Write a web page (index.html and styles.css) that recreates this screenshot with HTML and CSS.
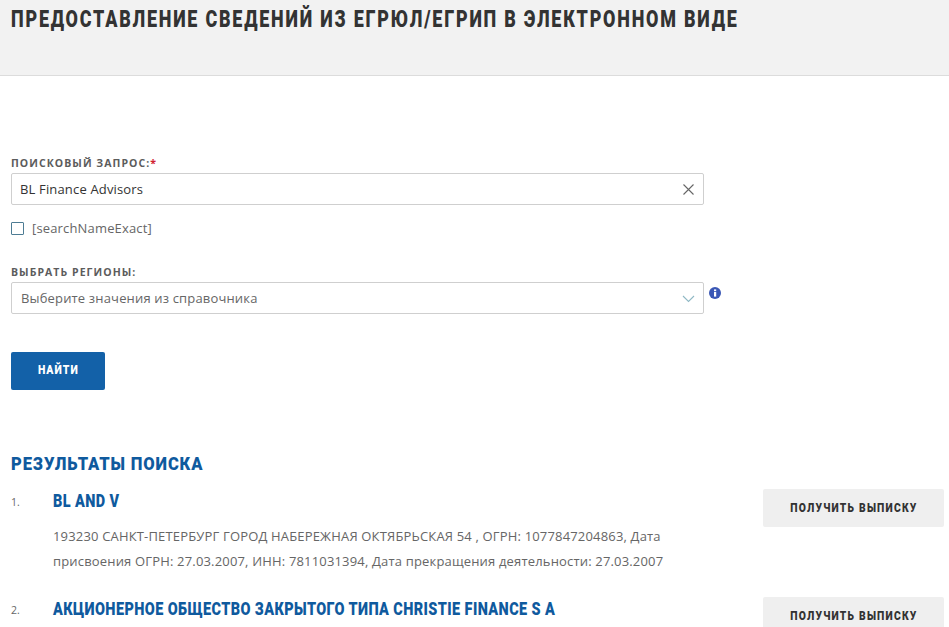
FILE: index.html
```html
<!DOCTYPE html>
<html lang="ru">
<head>
<meta charset="utf-8">
<title>Предоставление сведений из ЕГРЮЛ/ЕГРИП</title>
<link rel="stylesheet" href="styles.css">
</head>
<body>
<header class="page-head">
  <h1 class="page-title cond">ПРЕДОСТАВЛЕНИЕ СВЕДЕНИЙ ИЗ ЕГРЮЛ/ЕГРИП В ЭЛЕКТРОННОМ ВИДЕ</h1>
</header>
<main class="content">
  <form class="search-form">
    <div class="field">
      <div class="field-label">ПОИСКОВЫЙ ЗАПРОС:<span class="req">*</span></div>
      <div class="input-box">
        <span class="input-text">BL Finance Advisors</span>
        <svg class="icon-x" viewBox="0 0 13 13" width="13" height="13"><path d="M1.5 1.5L11.5 11.5M11.5 1.5L1.5 11.5" fill="none" stroke="#666" stroke-width="1.1"/></svg>
      </div>
    </div>
    <label class="check-row"><span class="checkbox"></span><span class="check-text">[searchNameExact]</span></label>
    <div class="field field-regions">
      <div class="field-label">ВЫБРАТЬ РЕГИОНЫ:</div>
      <div class="select-row">
        <div class="input-box">
          <span class="select-text">Выберите значения из справочника</span>
          <svg class="icon-chev" viewBox="0 0 13 8" width="13" height="8"><path d="M1 1L6.5 6.5L12 1" fill="none" stroke="#8fb8c4" stroke-width="1.1"/></svg>
        </div>
        <svg class="icon-info" viewBox="0 0 12 12" width="12" height="12"><circle cx="6" cy="6" r="6" fill="#3a57b5"/><rect x="5" y="5" width="2.2" height="4.6" fill="#fff"/><rect x="5" y="2.4" width="2.2" height="1.8" fill="#fff"/></svg>
      </div>
    </div>
    <button class="btn-primary" type="button"><span class="btn-label">НАЙТИ</span></button>
  </form>
  <section class="results">
    <h2 class="results-title cond">РЕЗУЛЬТАТЫ ПОИСКА</h2>
    <ol class="result-list">
      <li class="result">
        <span class="result-num">1.</span>
        <div class="result-body">
          <h3 class="result-name cond">BL AND V</h3>
          <p class="result-text">193230 САНКТ-ПЕТЕРБУРГ ГОРОД НАБЕРЕЖНАЯ ОКТЯБРЬСКАЯ 54 , ОГРН: 1077847204863, Дата присвоения ОГРН: 27.03.2007, ИНН: 7811031394, Дата прекращения деятельности: 27.03.2007</p>
        </div>
        <button class="btn-light" type="button"><span class="btn-label">ПОЛУЧИТЬ ВЫПИСКУ</span></button>
      </li>
      <li class="result result-second">
        <span class="result-num">2.</span>
        <div class="result-body">
          <h3 class="result-name cond">АКЦИОНЕРНОЕ ОБЩЕСТВО ЗАКРЫТОГО ТИПА CHRISTIE FINANCE S A</h3>
        </div>
        <button class="btn-light" type="button"><span class="btn-label">ПОЛУЧИТЬ ВЫПИСКУ</span></button>
      </li>
    </ol>
  </section>
</main>
</body>
</html>
```
FILE: styles.css
```css
* { box-sizing: border-box; }
html, body { margin: 0; height: 627px; overflow: hidden; background: #fff; }
body { font-family: "Open Sans", "Noto Sans", sans-serif; color: #333; }
h1, h2, h3, p, ol { margin: 0; padding: 0; }

.cond { font-family: "Roboto", sans-serif; font-weight: 900; white-space: nowrap; transform-origin: left center; }

.page-head { height: 76px; background: #f2f2f2; border-bottom: 1px solid #dcdcdc; padding: 5px 11px 0; }
.page-title { font-size: 24px; line-height: 28px; letter-spacing: 2.4px; color: #333; transform: scaleX(.747); }

.content { padding: 0 5px 0 11px; }
.search-form { padding-top: 80px; width: 710px; }
.field-label { font-size: 10.5px; line-height: 14px; font-weight: 700; letter-spacing: 1.05px; color: #5c5c5c; }
.req { color: #d0202e; }
.input-box { width: 693px; height: 32px; margin-top: 3px; border: 1px solid #cfcfcf; border-radius: 2px; background: #fff; display: flex; align-items: center; justify-content: space-between; padding: 0 8px; font-size: 13px; letter-spacing: .16px; }
.input-text { color: #333; }
.select-text { color: #666; padding-left: 1px; }
.icon-chev { margin-top: 1px; }
.check-row { display: flex; align-items: center; gap: 8px; margin-top: 15px; height: 16px; }
.checkbox { width: 13px; height: 13px; border: 1px solid #4d7c94; border-radius: 1px; }
.check-text { font-size: 13px; letter-spacing: .16px; color: #666; }
.field-regions { margin-top: 29px; }
.select-row { display: flex; align-items: flex-start; gap: 5px; }
.icon-info { margin-top: 8px; }
.btn-primary { display: block; width: 94px; height: 38px; margin-top: 38px; padding: 0 0 3px; border: 0; border-radius: 2px; background: #1361a8; color: #fff; }
.btn-label { display: inline-block; font-family: "Roboto", sans-serif; font-weight: 900; white-space: nowrap; font-size: 12.5px; letter-spacing: 1.2px; transform: scaleX(.84); }

.results { margin-top: 62px; }
.results-title { font-size: 19px; line-height: 24px; letter-spacing: 1px; color: #0f5a9e; transform: scaleX(.87); }
.result-list { list-style: none; margin-top: 13px; }
.result { display: flex; align-items: flex-start; }
.result-second { margin-top: 23px; }
.result-num { width: 42px; flex: none; font-size: 10.5px; line-height: 16px; padding-top: 5px; color: #666; }
.result-body { width: 710px; flex: none; }
.result-name { font-size: 18px; line-height: 24px; letter-spacing: .5px; color: #0f5a9e; transform: scaleX(.803); }
.result-text { width: 630px; margin-top: 0; padding-top: 11px; font-size: 13px; line-height: 25px; letter-spacing: .17px; color: #666; }
.btn-light { flex: none; width: 181px; height: 38px; padding: 0 0 2px; border: 0; border-radius: 2px; background: #efefef; color: #333; }
.btn-light .btn-label { font-size: 12px; letter-spacing: 1.4px; transform: scaleX(.86); }
```
